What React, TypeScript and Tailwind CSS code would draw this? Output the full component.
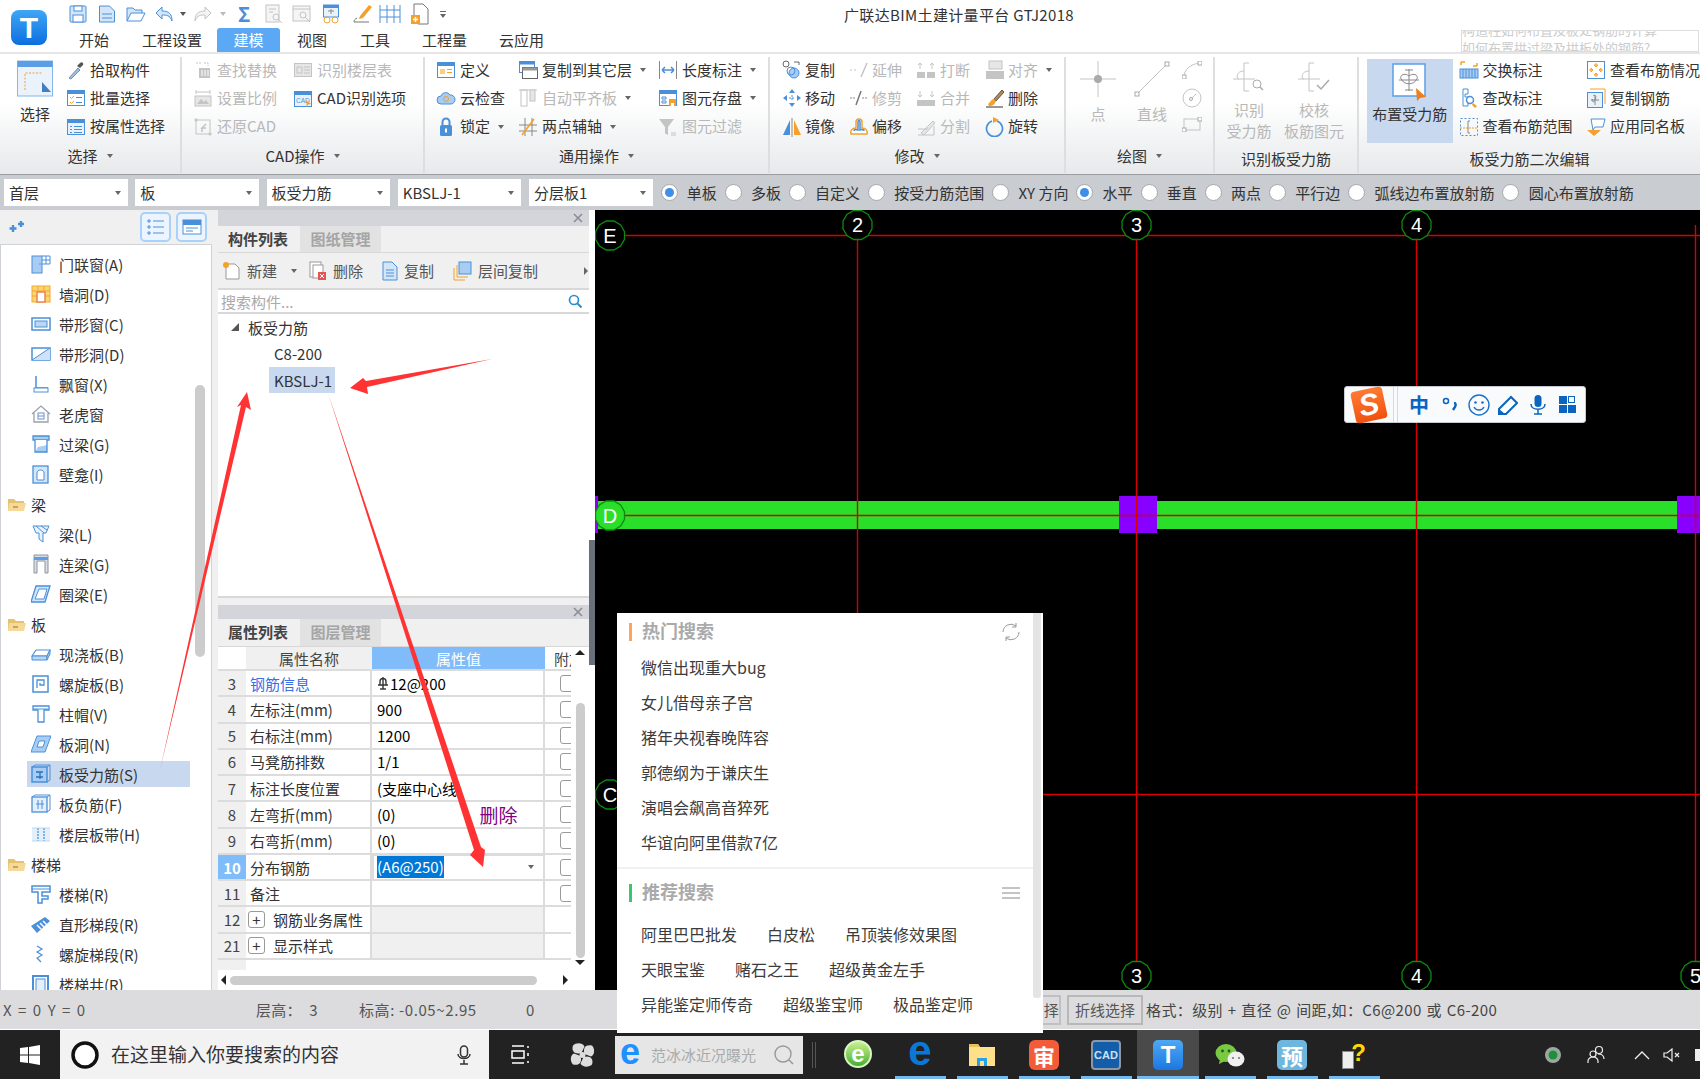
import React from 'react';

const B = '#4a90d9', L = '#d3e5f8', O = '#f5a02a', G = '#c4c4c4', GL = '#e6e6e6';

function S({ w = 20, h, children, vb }: { w?: number; h?: number; children?: React.ReactNode; vb?: string }) {
  const hh = h ?? w;
  return <svg width={w} height={hh} viewBox={vb ?? `0 0 ${w} ${hh}`} fill="none" className="shrink-0">{children}</svg>;
}

const Caret = ({ c = 'ml-[8px]' }: { c?: string }) => (
  <span className={`${c} inline-block w-0 h-0 border-x-[3.5px] border-x-transparent border-t-[4px] border-t-[#666] shrink-0`} />
);

function Item({ icon, text, dis, caret, g = 'w-[24px]' }: { icon: React.ReactNode; text: string; dis?: boolean; caret?: boolean; g?: string }) {
  return (
    <div className={`flex items-center h-[28.5px] whitespace-nowrap ${dis ? 'text-[#b8b8b8]' : 'text-[#333]'}`}>
      <span className={`${g} shrink-0 flex`}>{icon}</span>
      <span className="pb-[2px]">{text}</span>
      {caret && <Caret />}
    </div>
  );
}

function Group({ w, label, caret, children, last, low }: { w: string; label: string; caret?: boolean; children: React.ReactNode; last?: boolean; low?: boolean }) {
  return (
    <div className={`${w} shrink-0 flex flex-col mt-[3px] h-[116px] ${last ? '' : 'border-r-2 border-[#dcdee0]'}`}>
      <div className="h-[85px] -mt-[1px] flex">{children}</div>
      <div className={`flex-1 flex items-center justify-center text-[#333] ${low ? 'pt-[3px]' : 'pb-[3px]'}`}>
        <span>{label}</span>
        {caret && <Caret c="ml-[9px]" />}
      </div>
    </div>
  );
}

/* ---------- ribbon icons ---------- */
const docBox = (c: string, f: string, inner?: React.ReactNode) => (
  <S><rect x="1.5" y="2.5" width="17" height="15" fill={f} stroke={c} /><rect x="1.5" y="2.5" width="17" height="3.5" fill={c} />{inner}</S>
);
const ic = {
  dropper: <S><path d="M3 18l9-10 2 2-9 9z" fill="#9dc0e8" stroke="#7a8da5" /><path d="M11 6l3-3c2-2 4 0 3 2l-3 3z" fill="#555" /></S>,
  batch: docBox(B, '#fff', <><path d="M4 9l1.5 1.5L8 8M4 14l1.5 1.5L8 13" stroke={O} /><path d="M10 9.5h6M10 14.5h6" stroke={B} /></>),
  attr: docBox(B, '#e9f2fb', <path d="M4 9.5h2M8 9.5h8M4 12.5h2M8 12.5h8M4 15.5h2M8 15.5h8" stroke={B} />),
  find: <S><path d="M3 3h5M11 3h4v3" stroke={G} strokeDasharray="2 1" /><rect x="6" y="8" width="11" height="10" fill={G} /><path d="M9 10v6M12 10v6M15 10v6" stroke="#fff" /></S>,
  table: <S><rect x="1.5" y="3.5" width="17" height="13" fill={GL} stroke={G} /><path d="M4 7h5v6H4zM11 7h6M11 10h6M11 13h6" stroke={G} /></S>,
  scale: <S><path d="M3 4h14M3 2v4M17 2v4" stroke={G} /><rect x="2" y="8" width="16" height="10" fill={GL} stroke={G} /><path d="M4 16l4-5 3 3 2-2 3 4z" fill={G} /></S>,
  cadopt: docBox(B, '#e9f2fb', <><text x="3" y="14" fontSize="6.5" fill={B} fontFamily="Liberation Sans">CAD</text><path d="M13 11l5 4-3 .5-1 3z" fill={O} /></>),
  restore: <S><rect x="3" y="3" width="14" height="14" stroke={G} /><path d="M1 3h4M15 17h4M3 1v4M17 15v4" stroke={G} /><path d="M13 7l-4 4h4M9 11v4" stroke={G} strokeWidth="1.5" /></S>,
  define: docBox(B, '#fff', <><rect x="4" y="9" width="5" height="5" fill="#f9cf80" /><path d="M11 9.5h5M11 12.5h5" stroke={O} /></>),
  cloud: <S><path d="M5 16a4 4 0 010-8 5 5 0 019-1 4.5 4.5 0 011 9z" fill="#a9cdf2" stroke={B} /><circle cx="10" cy="11" r="2.5" stroke={O} /></S>,
  lock: <S><rect x="4" y="8" width="12" height="11" rx="1.5" fill={B} /><path d="M6.5 8V5a3.5 3.5 0 017 0v3" stroke={B} strokeWidth="2" /><rect x="9" y="11.5" width="2" height="4" fill="#fff" /></S>,
  copyto: <S><rect x="1.5" y="1.5" width="15" height="11" fill="#fff" stroke={B} /><rect x="1.5" y="1.5" width="15" height="3" fill={B} /><rect x="4.5" y="7.5" width="15" height="11" fill="#fff" stroke="#666" /><rect x="4.5" y="7.5" width="15" height="3" fill="#999" /></S>,
  align: <S><path d="M1 2h18" stroke={G} /><rect x="3" y="2" width="6" height="16" stroke={G} /><rect x="12" y="2" width="5" height="11" fill={GL} stroke={G} /></S>,
  twopt: <S><path d="M7 1v18M14 1v18M1 8h18M1 14h18" stroke="#888" /><path d="M4 18L16 2" stroke={O} strokeWidth="1.5" /></S>,
  length: <S><path d="M1.5 1v18M18.5 1v18" stroke="#888" /><path d="M4 10h12M4 10l3-3M4 10l3 3M16 10l-3-3M16 10l-3 3" stroke={B} strokeWidth="1.5" /></S>,
  save2: docBox(B, '#fff', <><path d="M4 9h4v2H4zM4 13h4v2H4z" stroke={B} /><rect x="11" y="11" width="7" height="7" fill={O} /><rect x="13" y="15" width="3" height="3" fill="#fff" /></>),
  filter: <S><path d="M1 2h15l-6 8v8l-3-1.5V10z" fill={G} /><path d="M13 16h5M13 18h5" stroke={G} /></S>,
  copy: <S><circle cx="4" cy="4" r="3" stroke="#666" /><path d="M12 2h5v3" stroke="#666" /><circle cx="12" cy="13" r="5" fill="#a9cdf2" stroke={B} /><circle cx="9" cy="11" r="4" stroke={B} /></S>,
  move: <S><path d="M10 1l3 4h-6zM10 19l3-4h-6zM1 10l4-3v6zM19 10l-4-3v6z" fill={B} /><path d="M7 10h6M10 7v6" stroke={B} strokeDasharray="2 1" /></S>,
  mirror: <S><path d="M8 3L1 18h7z" fill={B} /><path d="M10 1v19" stroke="#888" /><path d="M12 3l7 15h-7z" fill={O} /></S>,
  extend: <S><path d="M1 10h8" stroke={G} strokeDasharray="2 2" /><path d="M12 17L18 3" stroke={G} strokeWidth="1.5" /></S>,
  trim: <S><path d="M1 10h6M13 10h6" stroke="#888" strokeDasharray="2 1" /><path d="M7 17L12 3" stroke="#777" strokeWidth="1.5" /></S>,
  offset: <S><path d="M2 17c-1-3 1-6 5-6V5c0-4 6-4 6 0v6c4 0 6 3 5 6z" fill="#fff" stroke={O} strokeWidth="1.5" /><path d="M5 14c0-1 1-2 4-1V5c0-2 2-2 2 0v8c3-1 4 0 4 1" stroke={B} strokeWidth="1.5" /></S>,
  brk: <S><rect x="1" y="12" width="8" height="6" fill={G} /><rect x="11" y="12" width="8" height="6" fill={G} /><path d="M4 9V3M4 3l-2 2M4 3l2 2M16 9V3M16 3l-2 2M16 3l2 2" stroke={G} /></S>,
  merge: <S><rect x="1" y="12" width="18" height="6" fill={G} /><path d="M4 3v6M4 9l-2-2M4 9l2-2M16 3v6M16 9l-2-2M16 9l2-2" stroke={G} /></S>,
  split: <S><path d="M2 18h16V9" stroke={G} /><path d="M5 16L17 4l2 2L8 18z" fill={GL} stroke={G} /><path d="M2 12h10" stroke={G} /></S>,
  alignr: <S><rect x="4" y="1" width="13" height="8" fill={GL} stroke={G} /><rect x="1" y="11" width="18" height="8" fill={G} /></S>,
  del: <S><path d="M9 11L17 2l2 2-8 9z" fill="#b98a4a" stroke="#555" /><path d="M3 16c2-1 3-5 6-5l2 2c-1 3-3 5-7 5z" fill={O} /><path d="M1 19h17" stroke="#333" /></S>,
  rotate: <S><path d="M7 4a8 8 0 105 0" stroke={B} strokeWidth="1.7" /><path d="M8 0l6 3-6 3z" fill={O} /></S>,
  swap: <S><path d="M2 2h4M2 2v3M18 6h-4M18 6V3" stroke={O} strokeWidth="1.5" /><rect x="1" y="9" width="18" height="9" fill="#a9cdf2" stroke={B} /><path d="M4 9v9M7 9v9M10 9v9M13 9v9M16 9v9" stroke={B} /></S>,
  check: <S><path d="M4 1h5v5h-3v3h3v9H4z" stroke={B} /><circle cx="11" cy="12" r="3.5" fill="#fff" stroke={B} strokeWidth="1.5" /><path d="M14 15l4 3-2 2-3-3z" fill={O} /></S>,
  range: <S><rect x="1.5" y="1.5" width="17" height="17" stroke={B} strokeDasharray="2 2" /><path d="M1 11h18" stroke={O} strokeDasharray="2 1" /><path d="M11 4H9v12h2" stroke="#888" /></S>,
  view: <S><rect x="1.5" y="1.5" width="17" height="17" fill="#fff" stroke={B} /><path d="M10 3v4M10 13v4M3 10h4M13 10h4M10 7l-2-2h4zM10 13l-2 2h4zM7 10L5 8v4zM13 10l2-2v4z" stroke={O} /></S>,
  copysteel: <S><path d="M4 1h15v15" stroke={O} /><rect x="1.5" y="4.5" width="15" height="15" fill="#e9f2fb" stroke={B} /><path d="M9 7v10M5 12h8" stroke="#888" /><path d="M7 8c2-2 4 0 2 4s-4 0-2-1" stroke="#888" /></S>,
  apply: <S><path d="M5 2h14l-2 8H9l-2 3z" fill="#fff" stroke={B} /><path d="M1 13h14L8 19z" fill={O} /></S>,
};

const Big = ({ children, label, dis }: { children: React.ReactNode; label: React.ReactNode; dis?: boolean }) => (
  <div className={`flex flex-col items-center ${dis ? 'text-[#b8b8b8]' : 'text-[#333]'}`}>
    <div className="h-[41px] flex items-end">{children}</div>
    <div className="mt-[6px] leading-[21px] text-center whitespace-nowrap">{label}</div>
  </div>
);

function Ribbon() {
  return (
    <div className="h-[122px] shrink-0 flex bg-gradient-to-b from-white from-40% to-[#e7e9eb] border-t-2 border-[#e6e6e6] text-[15px] leading-none">
      <Group w="w-[182px]" label="选择" caret>
        <div className="w-[66px] pl-[4px] flex justify-center">
          <Big label="选择">
            <S w={36} h={37}><rect x="0.5" y="1" width="35" height="35" fill="#eaf2fb" stroke="#86b6ea" /><rect x="0.5" y="1" width="35" height="6" fill="#5b9ee6" /><path d="M8 30V13h18" stroke={O} strokeDasharray="2 1.5" /><path d="M25 22l9 10h-9z" fill="#3f7fc8" /></S>
          </Big>
        </div>
        <div className="flex flex-col">
          <Item icon={ic.dropper} text="拾取构件" />
          <Item icon={ic.batch} text="批量选择" />
          <Item icon={ic.attr} text="按属性选择" />
        </div>
      </Group>
      <Group w="w-[243px]" label="CAD操作" caret>
        <div className="pl-[11px] w-[111px] flex flex-col">
          <Item dis icon={ic.find} text="查找替换" />
          <Item dis icon={ic.scale} text="设置比例" />
          <Item dis icon={ic.restore} text="还原CAD" />
        </div>
        <div className="flex flex-col">
          <Item dis icon={ic.table} text="识别楼层表" />
          <Item icon={ic.cadopt} text="CAD识别选项" />
        </div>
      </Group>
      <Group w="w-[345px]" label="通用操作" caret>
        <div className="pl-[11px] w-[93px] flex flex-col">
          <Item icon={ic.define} text="定义" />
          <Item icon={ic.cloud} text="云检查" />
          <Item icon={ic.lock} text="锁定" caret />
        </div>
        <div className="w-[140px] flex flex-col">
          <Item icon={ic.copyto} text="复制到其它层" caret />
          <Item dis icon={ic.align} text="自动平齐板" caret />
          <Item icon={ic.twopt} text="两点辅轴" caret />
        </div>
        <div className="flex flex-col">
          <Item icon={ic.length} text="长度标注" caret />
          <Item icon={ic.save2} text="图元存盘" caret />
          <Item dis icon={ic.filter} text="图元过滤" />
        </div>
      </Group>
      <Group w="w-[296px]" label="修改" caret>
        <div className="pl-[12px] w-[79px] flex flex-col">
          <Item g="w-[23px]" icon={ic.copy} text="复制" />
          <Item g="w-[23px]" icon={ic.move} text="移动" />
          <Item g="w-[23px]" icon={ic.mirror} text="镜像" />
        </div>
        <div className="w-[67px] flex flex-col">
          <Item dis g="w-[23px]" icon={ic.extend} text="延伸" />
          <Item dis g="w-[23px]" icon={ic.trim} text="修剪" />
          <Item g="w-[23px]" icon={ic.offset} text="偏移" />
        </div>
        <div className="w-[69px] flex flex-col">
          <Item dis icon={ic.brk} text="打断" />
          <Item dis icon={ic.merge} text="合并" />
          <Item dis icon={ic.split} text="分割" />
        </div>
        <div className="flex flex-col">
          <Item dis g="w-[23px]" icon={ic.alignr} text="对齐" caret />
          <Item g="w-[23px]" icon={ic.del} text="删除" />
          <Item g="w-[23px]" icon={ic.rotate} text="旋转" />
        </div>
      </Group>
      <Group w="w-[149px]" label="绘图" caret>
        <div className="ml-[14px] w-[36px] flex justify-center">
          <Big dis label="点">
            <S w={36} h={36}><path d="M18 0v36M0 18h36" stroke={G} /><circle cx="18" cy="18" r="4" fill="#aaa" /></S>
          </Big>
        </div>
        <div className="ml-[18px] w-[36px] flex justify-center">
          <Big dis label="直线">
            <S w={36} h={36}><path d="M3 33L33 3" stroke={G} /><rect x="1" y="31" width="4" height="4" fill="#fff" stroke="#aaa" /><rect x="31" y="1" width="4" height="4" fill="#fff" stroke="#aaa" /></S>
          </Big>
        </div>
        <div className="ml-[12px] flex flex-col gap-[9px] pt-[5px]">
          <S w={20} h={18}><path d="M2 16c0-7 6-13 16-14" stroke={G} /><rect x="0" y="14" width="4" height="4" fill="#fff" stroke="#aaa" /><rect x="16" y="0" width="4" height="4" fill="#fff" stroke="#aaa" /></S>
          <S w={20} h={20}><circle cx="10" cy="10" r="9" stroke={G} /><circle cx="9" cy="11" r="1.5" stroke="#aaa" /><path d="M10 10l4-4" stroke={G} /></S>
          <S w={20} h={15}><rect x="2" y="2" width="16" height="11" stroke={G} /><rect x="0" y="11" width="4" height="4" fill="#fff" stroke="#aaa" /><rect x="16" y="0" width="4" height="4" fill="#fff" stroke="#aaa" /></S>
        </div>
      </Group>
      <Group w="w-[144px]" label="识别板受力筋" low>
        <div className="w-[68px] flex justify-center">
          <Big dis label={<>识别<br />受力筋</>}>
            <S w={34} h={32}><path d="M1 18h22M12 2v28M12 2h5M12 30h5" stroke={G} /><path d="M7 18c-3 0-3-8 5-8" stroke={G} /><circle cx="25" cy="23" r="4" stroke="#aaa" /><path d="M28 26l3 3" stroke="#aaa" strokeWidth="1.5" /></S>
          </Big>
        </div>
        <div className="w-[62px] flex justify-center">
          <Big dis label={<>校核<br />板筋图元</>}>
            <S w={34} h={32}><path d="M1 18h22M12 2v28M12 2h5M12 30h5" stroke={G} /><path d="M7 18c-3 0-3-8 5-8" stroke={G} /><path d="M20 24l4 4 8-9" stroke="#aaa" strokeWidth="1.5" /></S>
          </Big>
        </div>
      </Group>
      <Group w="w-[341px]" label="板受力筋二次编辑" last low>
        <div className="ml-[8px] w-[86px] h-[84px] bg-[#c7d8ef] flex flex-col items-center mt-[3px] text-[#333]">
          <div className="mt-[4px]">
            <S w={36} h={38}><rect x="1" y="1" width="32" height="32" fill="#fff" stroke="#5b9ee6" strokeWidth="1.5" /><path d="M17 6v22M7 17h20M13 7h8M13 27h8" stroke="#888" /><path d="M10 17c-4-4 2-8 7-4 5-4 11 0 7 4-2 5-12 5-14 0z" stroke="#888" /><path d="M24 25l10 9-6 1-3 3z" fill="#ef7d1d" /></S>
          </div>
          <div className="mt-[5px] whitespace-nowrap">布置受力筋</div>
        </div>
        <div className="ml-[6px] w-[128px] flex flex-col">
          <Item icon={ic.swap} text="交换标注" />
          <Item icon={ic.check} text="查改标注" />
          <Item icon={ic.range} text="查看布筋范围" />
        </div>
        <div className="flex flex-col">
          <Item icon={ic.view} text="查看布筋情况" />
          <Item icon={ic.copysteel} text="复制钢筋" />
          <Item icon={ic.apply} text="应用同名板" />
        </div>
      </Group>
    </div>
  );
}

function Header() {
  const qat = (
    <div className="flex items-center h-full">
      <S w={18} h={20}><rect x="1" y="2" width="16" height="16" rx="1" fill={L} stroke={B} /><rect x="5" y="2" width="8" height="5" fill="#fff" stroke={B} /><rect x="4" y="11" width="10" height="7" fill="#fff" stroke={B} /></S>
      <span className="ml-[11px]"><S w={18} h={20}><path d="M1.5 2h10l5 5v11h-15z" fill={L} stroke={B} /><path d="M4 10h10M4 14h10" stroke={B} /></S></span>
      <span className="ml-[10px]"><S w={20} h={20}><path d="M1 17V4h6l2 2h7v3" fill={L} stroke={B} /><path d="M1 17l4-8h14l-4 8z" fill="#fff" stroke={B} /></S></span>
      <span className="ml-[9px]"><S w={18} h={18}><path d="M7 2L1 8l6 6V10c4 0 8 0 10 6 0-7-3-10-10-10z" fill={L} stroke={B} /></S></span>
      <span className="ml-[7px] w-0 h-0 border-x-[3px] border-x-transparent border-t-[4px] border-t-[#555]" />
      <span className="ml-[8px]"><S w={18} h={18}><path d="M11 2l6 6-6 6V10C7 10 3 10 1 16c0-7 3-10 10-10z" fill="#f3f3f3" stroke={G} /></S></span>
      <span className="ml-[8px] w-0 h-0 border-x-[3px] border-x-transparent border-t-[4px] border-t-[#bbb]" />
      <span className="ml-[12px] w-[16px] text-[20px] font-bold text-[#4a90d9] leading-none">Σ</span>
      <span className="ml-[11px]"><S w={19} h={20}><rect x="1" y="1" width="13" height="17" fill="#f5f5f5" stroke={G} /><circle cx="11" cy="13" r="3" stroke={G} /><path d="M13 15l4 4M4 5h7M4 8h4" stroke={G} /></S></span>
      <span className="ml-[8px]"><S w={20} h={20}><rect x="1" y="2" width="17" height="15" fill="#f5f5f5" stroke={G} /><path d="M1 5h17" stroke={G} /><circle cx="11" cy="11" r="3" stroke={G} /><path d="M13 13l5 5" stroke={G} /></S></span>
      <span className="ml-[10px]"><S w={20} h={20}><rect x="1.5" y="1" width="15" height="12" fill="#e9f2fb" stroke={B} /><rect x="1.5" y="1" width="15" height="3" fill={B} /><path d="M6 7h6M9 5v5" stroke="#888" /><circle cx="5" cy="16" r="3" stroke={O} /><circle cx="13" cy="16" r="3" stroke={O} /></S></span>
      <span className="ml-[11px]"><S w={20} h={20}><path d="M7 12L16 1l3 2-9 11-4 1z" fill={O} /><path d="M1 18h15M4 14c-2 1-3 2-3 4" stroke="#777" /></S></span>
      <span className="ml-[6px]"><S w={22} h={20}><path d="M1 1v18M21 1v18M1 6h20M1 13h20M8 1v18M15 1v18" stroke={B} /></S></span>
      <span className="ml-[9px]"><S w={21} h={22}><path d="M4 12V1h9l5 5v15H8" fill="#fff" stroke="#777" /><rect x="1" y="12" width="9" height="9" fill={O} /><path d="M5.5 14v5M3 16.5h5" stroke="#fff" strokeWidth="1.5" /></S></span>
      <span className="ml-[9px] flex flex-col gap-[2px] items-center"><span className="w-[6px] h-[1px] bg-[#666]" /><span className="w-0 h-0 border-x-[3px] border-x-transparent border-t-[4px] border-t-[#666]" /></span>
    </div>
  );
  return (
    <div className="h-[52px] shrink-0 flex bg-white">
      <div className="w-[57px] shrink-0 pl-[11px] pt-[10px] flex items-start">
        <div className="w-[36px] h-[35px] rounded-[8px] bg-gradient-to-b from-[#3fa6f5] to-[#0a6ee0] flex items-center justify-center text-white text-[30px] font-bold leading-none [font-family:'Liberation_Sans',sans-serif]">T</div>
      </div>
      <div className="flex-1 flex flex-col min-w-0">
        <div className="h-[28px] pl-[12px] flex items-center">
          {qat}
          <div className="ml-[398px] text-[15px] text-[#333] leading-none whitespace-nowrap tracking-[0.35px]">广联达BIM土建计量平台 GTJ2018</div>
        </div>
        <div className="h-[24px] flex text-[15px] text-[#333] leading-none items-center whitespace-nowrap">
          <span className="ml-[22px] pb-[2px] shrink-0">开始</span>
          <span className="ml-[33px] pb-[2px] shrink-0">工程设置</span>
          <span className="ml-[15px] w-[63px] h-[24px] shrink-0 bg-[#5ba9f5] text-white rounded-t-[3px] flex items-center justify-center pb-[2px]">建模</span>
          <span className="ml-[17px] pb-[2px] shrink-0">视图</span>
          <span className="ml-[33px] pb-[2px] shrink-0">工具</span>
          <span className="ml-[32px] pb-[2px] shrink-0">工程量</span>
          <span className="ml-[32px] pb-[2px] shrink-0">云应用</span>
          <div className="ml-[917px] w-[238px] h-[22px] shrink-0 border border-[#dddddd] overflow-hidden text-[13px] leading-[18px] text-[#cccccc] whitespace-nowrap self-end">
            <div className="-mt-[10px]">构造柱如何布置及板处钢筋的计算</div>
            <div>如何布置拱过梁及拱板处的钢筋?</div>
          </div>
        </div>
      </div>
    </div>
  );
}

const Sel = ({ t }: { t: string }) => (
  <div className="w-[123.5px] shrink-0 h-[27px] bg-white flex items-center justify-between pl-[5px] pr-[7px] text-[15px] text-[#333] leading-none">
    <span>{t}</span><Caret c="" />
  </div>
);

const Radio = ({ t, on }: { t: string; on?: boolean }) => (
  <div className="flex items-center gap-[9.2px] text-[15px] text-[#333] leading-none whitespace-nowrap">
    <span className="w-[17px] h-[17px] rounded-full bg-white border border-[#a5a8ad] flex items-center justify-center">
      {on && <span className="w-[9px] h-[9px] rounded-full bg-[#3f8fe8]" />}
    </span>
    <span>{t}</span>
  </div>
);

function OptionBar() {
  return (
    <div className="h-[36px] shrink-0 bg-[#c9ccd1] border-t border-[#9a9da2] flex items-center pl-[4px]">
      <div className="flex gap-[7.75px]">
        <Sel t="首层" />
        <Sel t="板" />
        <Sel t="板受力筋" />
        <Sel t="KBSLJ-1" />
        <Sel t="分层板1" />
      </div>
      <div className="ml-[8px] flex gap-[8px]">
        <Radio t="单板" on />
        <Radio t="多板" />
        <Radio t="自定义" />
        <Radio t="按受力筋范围" />
        <Radio t="XY 方向" />
        <Radio t="水平" on />
        <Radio t="垂直" />
        <Radio t="两点" />
        <Radio t="平行边" />
        <Radio t="弧线边布置放射筋" />
        <Radio t="圆心布置放射筋" />
      </div>
    </div>
  );
}

/* ---------- tree icons ---------- */
const tIc: Record<string, React.ReactNode> = {
  a: <S><rect x="1" y="2" width="10" height="17" fill="#a9cdf2" stroke={B} /><circle cx="9" cy="10" r=".8" fill={B} /><path d="M11 2h8v8h-8M15 2v8M11 6h8" stroke={B} /></S>,
  b: <S><rect x="1" y="2" width="18" height="16" fill="#fbd474" stroke="#f3a92a" /><path d="M1 7h18M1 12h18M7 2v5M13 2v5" stroke="#f3a92a" /><rect x="6" y="8" width="8" height="10" fill="#fff" stroke="#e8845a" strokeWidth="1.5" /></S>,
  c: <S><rect x="1" y="4" width="18" height="12" fill="#fff" stroke={B} strokeWidth="1.5" /><rect x="4" y="7" width="12" height="6" fill="#bcd7f3" stroke={B} /></S>,
  d: <S><rect x="1" y="4" width="18" height="12" fill="#fff" stroke={B} strokeWidth="1.5" /><path d="M1 16L19 4v12z" fill="#cfe2f7" /><path d="M1 16L19 4" stroke={B} /></S>,
  e: <S><path d="M5 2v12h12" stroke={B} strokeWidth="1.5" /><rect x="3" y="14" width="14" height="4" fill="#fff" stroke={B} /></S>,
  f: <S><path d="M1 10l9-8 9 8M3 9v9h14V9" stroke="#9aa1a8" strokeWidth="1.3" /><rect x="7" y="9" width="6" height="6" stroke="#6b94c4" /><path d="M7 12h6" stroke="#6b94c4" /></S>,
  g: <S><path d="M2 2h16v4H2z" fill="#a9cdf2" stroke={B} strokeWidth="1.3" /><path d="M4 6v12h12V6" fill="#fff" /><path d="M4 18l3-5 9-2v7z" fill="#a9cdf2" /><path d="M4 6v12h12V6" stroke={B} strokeWidth="1.3" /></S>,
  h: <S><rect x="2" y="2" width="15" height="17" fill="#d3e5f8" stroke={B} strokeWidth="1.3" /><path d="M6 16V9c0-4 7-4 7 0v7z" fill="#fff" stroke={B} /></S>,
  i: <S><path d="M2 2h16l-3 7h-3v9l-4-3V9H5z" fill="#e9f2fb" stroke={B} /><path d="M5 2l8 7M10 2l6 4" stroke={B} /></S>,
  j: <S><path d="M3 1h14v18h-3V7H6v12H3z" fill="#d8dde3" stroke="#8e959c" /><rect x="3" y="3" width="14" height="3" fill="#5b9ee6" /></S>,
  k: <S><path d="M5 2h14l-5 16H0z" fill="#d3e5f8" stroke={B} strokeWidth="1.3" /><path d="M8 5h8l-3 10H4z" fill="#fff" stroke={B} /></S>,
  l: <S><path d="M1 12l4-6h14l-3 6z" fill="#fff" stroke={B} strokeWidth="1.2" /><path d="M1 12h15v4H1z" fill="#bcd7f3" stroke={B} /><path d="M16 12l3-6v4l-3 6z" fill="#a9cdf2" stroke={B} /></S>,
  m: <S><rect x="2" y="2" width="15" height="16" fill="#fff" stroke={B} strokeWidth="1.5" /><path d="M6 14V6h7v5H9V9" stroke={B} strokeWidth="1.3" /></S>,
  n: <S><path d="M2 2h16v4h-5v12H7V6H2z" fill="#fff" stroke={B} strokeWidth="1.3" /><path d="M2 5h16" stroke={B} /></S>,
  o: <S><path d="M6 2h14l-6 16H0z" fill="#a9cdf2" stroke={B} /><path d="M8 7h6l-2 6H6z" fill="#fff" stroke={B} /></S>,
  p: <S><rect x="1" y="3" width="15" height="15" fill="#a9cdf2" stroke={B} strokeWidth="1.5" /><path d="M16 3l3-2v15l-3 2M1 3l3-2h15" stroke={B} /><path d="M5 8h7M5 13h7M9 8v7" stroke="#2a6fba" strokeWidth="1.3" /></S>,
  q: <S><rect x="1" y="3" width="15" height="15" fill="#e3effb" stroke={B} strokeWidth="1.3" /><path d="M16 3l3-2v15l-3 2M1 3l3-2h15" stroke={B} /><path d="M7 6v9M11 6v9M5 10h8" stroke={B} /></S>,
  r: <S><rect x="1" y="4" width="18" height="13" fill="#e3effb" /><path d="M7 4v13M13 4v13" stroke={B} strokeDasharray="2 1" strokeWidth="1.3" /><path d="M1 4h18M1 17h18" stroke="#bcd7f3" /></S>,
  s: <S><path d="M1 2h18v6h-8v4h6v3h-6v4H7V8H1z" fill="#fff" stroke={B} strokeWidth="1.5" /><path d="M1 5h18" stroke={B} /></S>,
  t: <S><path d="M0 12l14-9 5 4-13 12z" fill={B} /><path d="M6 11l4 4M9 9l4 4M12 7l4 4" stroke="#fff" strokeWidth="1.5" /></S>,
  u: <S><path d="M6 2l5 3-5 3 5 3-5 3 4 4" stroke={B} strokeWidth="1.2" /></S>,
  v: <S><rect x="2" y="2" width="15" height="17" fill="#fff" stroke={B} strokeWidth="2" /><rect x="5" y="5" width="9" height="12" fill="#e3effb" stroke={B} /></S>,
};
const Folder = () => <S w={20} h={18}><path d="M1 15V4h6l2 2h8v3" fill="#e5c26e" /><path d="M1 16l1-8h17l-2 8z" fill="#f6d998" /><path d="M6 12h5" stroke="#a88a3c" strokeWidth="1.3" /></S>;

const treeData: [string, string][] = [
  ['a', '门联窗(A)'], ['b', '墙洞(D)'], ['c', '带形窗(C)'], ['d', '带形洞(D)'], ['e', '飘窗(X)'], ['f', '老虎窗'], ['g', '过梁(G)'], ['h', '壁龛(I)'],
  ['', '梁'], ['i', '梁(L)'], ['j', '连梁(G)'], ['k', '圈梁(E)'],
  ['', '板'], ['l', '现浇板(B)'], ['m', '螺旋板(B)'], ['n', '柱帽(V)'], ['o', '板洞(N)'], ['p', '板受力筋(S)'], ['q', '板负筋(F)'], ['r', '楼层板带(H)'],
  ['', '楼梯'], ['s', '楼梯(R)'], ['t', '直形梯段(R)'], ['u', '螺旋梯段(R)'], ['v', '楼梯井(R)'],
];

function LeftPanel() {
  return (
    <div className="w-[218px] shrink-0 pr-[6px] bg-[#f0f0f0] h-full flex flex-col">
      <div className="h-[35px] shrink-0 bg-[#f0f0f0] border-b border-[#cfd2d6] flex items-center pl-[8px]">
        <S w={18} h={14}><path d="M5 5v7M1.5 8.5h7M13 1v6M10 4h6" stroke={B} strokeWidth="2.4" /></S>
        <span className="ml-[114px] w-[31px] h-[30px] rounded-[5px] border-2 border-[#a9d2fb] bg-[#ecf5ff] flex items-center justify-center">
          <S w={18} h={16}><path d="M6 2h11M6 8h11M6 14h11" stroke={B} /><path d="M1 1h2v2H1zM1 7h2v2H1zM1 13h2v2H1z" stroke={B} /></S>
        </span>
        <span className="ml-[5px] w-[31px] h-[30px] rounded-[5px] border-2 border-[#a9d2fb] bg-[#ecf5ff] flex items-center justify-center">
          <S w={20} h={16}><rect x="1" y="1" width="18" height="14" fill="#fff" stroke={B} /><rect x="1" y="1" width="18" height="5" fill={B} /><path d="M4 9h12M4 12h7" stroke={B} /></S>
        </span>
      </div>
      <div className="flex-1 bg-white border-l border-[#cfd2d6] border-r border-r-[#cfd2d6] flex overflow-hidden text-[15px] text-[#333] leading-none">
        <div className="w-[194px] shrink-0 pt-[4px]">
          {treeData.map(([k, t]) => k === '' ? (
            <div key={t} className="h-[30px] flex items-center pl-[6px]">
              <span className="w-[24px] shrink-0 flex"><Folder /></span><span>{t}</span>
            </div>
          ) : (
            <div key={t} className="h-[30px] pl-[26px] flex items-center">
              <div className={`w-[163px] h-[26px] pl-[4px] flex items-center ${k === 'p' ? 'bg-[#c7d8ef]' : ''}`}>
                <span className="w-[28px] shrink-0 flex">{tIc[k]}</span><span className="whitespace-nowrap">{t}</span>
              </div>
            </div>
          ))}
        </div>
        <div className="w-[10px] h-[272px] mt-[140px] rounded-[5px] bg-[#cccccc] shrink-0" />
      </div>
    </div>
  );
}

const Close = () => <S w={10} h={10}><path d="M1 1l8 8M9 1l-8 8" stroke="#8a8d92" strokeWidth="1.6" /></S>;

const Tabs = ({ a, b, h }: { a: string; b: string; h: string }) => (
  <div className={`${h} shrink-0 flex bg-[#f0f0f0] border-b border-[#d8d8d8] text-[15px] leading-none`}>
    <div className="w-[80px] flex items-center justify-center font-bold text-[#444] pb-[2px]">{a}</div>
    <div className="ml-[2px] w-[81px] flex items-center justify-center bg-[#e2e2e2] text-[#a5a5a5] font-bold pb-[2px]">{b}</div>
  </div>
);

const rows: [string, string, string, string?][] = [
  ['3', '钢筋信息', '12@200', 'blue'],
  ['4', '左标注(mm)', '900'],
  ['5', '右标注(mm)', '1200'],
  ['6', '马凳筋排数', '1/1'],
  ['7', '标注长度位置', '(支座中心线'],
  ['8', '左弯折(mm)', '(0)'],
  ['9', '右弯折(mm)', '(0)'],
  ['10', '分布钢筋', '(A6@250)', 'sel'],
  ['11', '备注', ''],
  ['12', '钢筋业务属性', '', 'grp'],
  ['21', '显示样式', '', 'grp'],
];

function PropRow({ r }: { r: [string, string, string, string?] }) {
  const [n, name, val, kind] = r;
  const sel = kind === 'sel', grp = kind === 'grp';
  return (
    <div className="h-[26.35px] flex border-b-2 border-[#dcdcdc] box-border">
      <div className={`w-[28px] shrink-0 flex items-center justify-center ${sel ? 'bg-[#7fbcf9] text-white font-bold' : 'bg-[#f0f0f0] text-[#444]'}`}>{n}</div>
      <div className={`w-[126px] shrink-0 flex items-center pl-[4px] border-r-2 border-[#dcdcdc] whitespace-nowrap ${kind === 'blue' ? 'text-[#3a6fe8]' : 'text-[#333]'}`}>
        {grp && <span className="mr-[8px] w-[17px] h-[17px] rounded-[3px] border border-[#999] flex items-center justify-center text-[15px] leading-none shrink-0 -ml-[2px]">+</span>}
        {name}
      </div>
      <div className={`w-[173px] shrink-0 flex items-center border-r-2 border-[#dcdcdc] whitespace-nowrap ${grp ? 'bg-[#f0f0f0]' : ''} ${sel ? 'pl-[3px] pr-[9px] justify-between border-2 border-[#4ea3f5] -mt-[1px] h-[27px]' : 'pl-[5px]'}`}>
        {kind === 'blue' && <span className="mr-[1px]"><S w={12} h={14}><path d="M1 9h10M6 1v12M3 9V5.5a3 3 0 016 0V9" stroke="#333" strokeWidth="1.4" /><path d="M3 13h6" stroke="#333" strokeWidth="1.4" /></S></span>}
        {sel ? <><span className="bg-[#0078d7] text-white h-[22px] leading-[22px]">{val}</span><Caret c="" /></> : <span>{val}</span>}
        {n === '8' && <span className="ml-[84px] text-[19px] text-[#800080]">删除</span>}
      </div>
      <div className="w-[26px] shrink-0 flex items-center overflow-hidden pl-[15px]">
        {!grp && <span className="w-[17px] h-[17px] shrink-0 border border-[#9a9a9a] rounded-[3px] bg-white" />}
      </div>
    </div>
  );
}

function CenterPanel() {
  return (
    <div className="w-[371px] shrink-0 h-full flex flex-col bg-[#f0f0f0]">
      <div className="h-[16px] shrink-0 bg-[#d3d5da] flex items-center justify-end pr-[6px]"><Close /></div>
      <Tabs a="构件列表" b="图纸管理" h="h-[27px]" />
      <div className="h-[37px] shrink-0 bg-[#f0f0f0] border-b-2 border-[#d8d8d8] flex items-center text-[15px] text-[#555] leading-none pl-[5px] whitespace-nowrap overflow-hidden">
        <S w={18} h={20}><path d="M3 3h9l4 4v11H3z" fill="#fff" stroke="#999" /><circle cx="3" cy="4" r="3" fill={O} /></S>
        <span className="ml-[6px]">新建</span><Caret c="ml-[14px]" />
        <span className="ml-[12px]"><S w={18} h={20}><rect x="1" y="1" width="11" height="15" fill="#fff" stroke="#999" /><rect x="4" y="4" width="10" height="13" fill="#fff" stroke="#999" /><rect x="9" y="11" width="8" height="8" fill="#e05555" /><path d="M11 13l4 4M15 13l-4 4" stroke="#fff" /></S></span>
        <span className="ml-[6px]">删除</span>
        <span className="ml-[19px]"><S w={16} h={20}><path d="M1 1h9l5 5v13H1z" fill={L} stroke={B} /><path d="M4 9h8M4 12h8M4 15h8" stroke={B} /></S></span>
        <span className="ml-[6px]">复制</span>
        <span className="ml-[19px]"><S w={19} h={20}><rect x="6" y="1" width="12" height="12" fill="#a9cdf2" stroke={B} /><path d="M4 4v12h11M1 7v12h11" stroke={O} /></S></span>
        <span className="ml-[6px]">层间复制</span>
        <span className="ml-[46px]"><S w={9} h={8}><path d="M0 0l4 4-4 4zM5 0l4 4-4 4z" fill="#666" /></S></span>
      </div>
      <div className="h-[24px] shrink-0 bg-white border-b-2 border-[#d8d8d8] flex items-center justify-between pl-[3px] pr-[7px] text-[15px] text-[#aaa] leading-none">
        <span>搜索构件...</span>
        <S w={14} h={15}><circle cx="6" cy="6" r="4.5" stroke="#2a8fd0" strokeWidth="1.7" /><path d="M9.5 9.5l4 4" stroke="#2a8fd0" strokeWidth="2" /></S>
      </div>
      <div className="h-[284px] shrink-0 bg-white border-b-2 border-[#d8d8d8] text-[15px] text-[#333] leading-none">
        <div className="h-[26px] flex items-center pl-[13px]">
          <span className="w-[17px] shrink-0"><S w={8} h={8}><path d="M8 0v8H0z" fill="#555" /></S></span>
          <span>板受力筋</span>
        </div>
        <div className="h-[27px] flex items-center pl-[56px]">C8-200</div>
        <div className="ml-[51px] w-[66px] h-[26px] bg-[#c7d8ef] flex items-center pl-[5px]">KBSLJ-1</div>
      </div>
      <div className="h-[7px] shrink-0" />
      <div className="h-[14px] shrink-0 bg-[#d3d5da] flex items-center justify-end pr-[6px]"><Close /></div>
      <Tabs a="属性列表" b="图层管理" h="h-[28px]" />
      <div className="flex-1 bg-white flex flex-col text-[15px] leading-none min-h-0">
        <div className="flex flex-1 min-h-0">
          <div className="w-[353px] shrink-0 flex flex-col">
            <div className="h-[24px] shrink-0 flex border-b-2 border-[#dcdcdc]">
              <div className="w-[28px] shrink-0 bg-white" />
              <div className="w-[126px] shrink-0 bg-[#f0f0f0] flex items-center justify-center text-[#444]">属性名称</div>
              <div className="w-[173px] shrink-0 bg-[#7fbcf9] flex items-center justify-center text-white">属性值</div>
              <div className="w-[26px] shrink-0 flex items-center pl-[9px] overflow-hidden whitespace-nowrap text-[#444]">附加</div>
            </div>
            {rows.map(r => <PropRow key={r[0]} r={r} />)}
            <div className="w-[28px] h-[10px] bg-[#f0f0f0]" />
          </div>
          <div className="w-[18px] shrink-0 flex flex-col items-center">
            <span className="mt-[3px] w-0 h-0 border-x-[5px] border-x-transparent border-b-[5px] border-b-[#222]" />
            <div className="mt-[48px] w-[9px] h-[255px] rounded-[5px] bg-[#cccccc]" />
            <span className="mt-[2px] w-0 h-0 border-x-[5px] border-x-transparent border-t-[5px] border-t-[#222]" />
          </div>
        </div>
        <div className="h-[20px] shrink-0 flex items-center pl-[3px]">
          <span className="w-0 h-0 border-y-[5px] border-y-transparent border-r-[5px] border-r-[#222]" />
          <span className="ml-[4px] w-[307px] h-[9px] rounded-[5px] bg-[#cccccc]" />
          <span className="ml-[26px] w-0 h-0 border-y-[5px] border-y-transparent border-l-[5px] border-l-[#222]" />
        </div>
      </div>
    </div>
  );
}

function Canvas() {
  const axis = (x: number, y: number, t: string, onBeam?: boolean) => {
    const r = 15;
    const pts = Array.from({ length: 12 }, (_, i) => {
      const a = Math.PI / 12 + (i * Math.PI) / 6;
      return `${x + r * Math.cos(a)},${y + r * Math.sin(a)}`;
    }).join(' ');
    return (
      <g key={`${t}${x}${y}`}>
        <polygon points={pts} fill={onBeam ? '#2adf2a' : 'black'} stroke="#0e8a0e" strokeWidth="1.3" />
        <text x={x} y={y + 7} textAnchor="middle" fontSize="20" fill="white" fontFamily="Liberation Sans">{t}</text>
      </g>
    );
  };
  const v = [262.5, 541.5, 821.5, 1100.5];
  const h = [25.5, 305.5, 584.5];
  return (
    <div className="flex-1 h-full bg-black relative overflow-hidden">
      <svg width="1105" height="780" viewBox="0 0 1105 780" className="block">
        <rect x="3" y="291" width="1079" height="28" fill="#2adf2a" />
        <rect x="0" y="286" width="3" height="37" fill="#8800ff" />
        <rect x="524" y="286" width="38" height="37" fill="#8800ff" />
        <rect x="1082" y="286" width="23" height="37" fill="#8800ff" />
        {h.map(y => <line key={y} x1="15" x2="1105" y1={y} y2={y} stroke="#d80000" strokeWidth="1.4" />)}
        {v.map(x => <line key={x} x1={x} x2={x} y1="15" y2="766" stroke="#d80000" strokeWidth="1.4" />)}
        {axis(15, 25.5, 'E')}
        {axis(15, 305.5, 'D', true)}
        {axis(15, 584.5, 'C')}
        {axis(262.5, 15, '2')}
        {axis(541.5, 15, '3')}
        {axis(821.5, 15, '4')}
        {axis(541.5, 766, '3')}
        {axis(821.5, 766, '4')}
        {axis(1100.5, 766, '5')}
      </svg>
      <div className="absolute left-[749px] top-[176px] w-[242px] h-[37px] rounded-[3px] bg-[#f9fafc] border border-[#c5c9d0] flex items-center">
        <div className="ml-[8px] w-[32px] h-[32px] rounded-[4px] rotate-[-12deg] bg-gradient-to-b from-[#ff7a30] to-[#f0500f] flex items-center justify-center text-white text-[30px] font-bold italic leading-none [font-family:'Liberation_Sans',sans-serif]">S</div>
        <div className="ml-[8px] w-[5px] h-[35px] border-x border-[#f3d0c4]" />
        <span className="ml-[11px] text-[20px] font-bold text-[#0a64c0] leading-none">中</span>
        <span className="ml-[13px]"><S w={16} h={20}><circle cx="4" cy="6" r="2.5" stroke="#0a64c0" strokeWidth="1.5" /><path d="M12 8c2 0 2 2 1 4l-2 3" stroke="#0a64c0" strokeWidth="2.4" /></S></span>
        <span className="ml-[10px]"><S w={22} h={22}><circle cx="11" cy="11" r="10" stroke="#1a72c8" strokeWidth="1.4" /><circle cx="7.5" cy="8.5" r="1.3" fill="#1a72c8" /><circle cx="14.5" cy="8.5" r="1.3" fill="#1a72c8" /><path d="M6 13c2 4 8 4 10 0" stroke="#1a72c8" strokeWidth="1.4" /></S></span>
        <span className="ml-[8px]"><S w={20} h={20}><path d="M1 14L13 2l6 6L8 19H1z" fill="#fff" stroke="#0a64c0" strokeWidth="2" /><path d="M1 14l6 5H1z" fill="#0a64c0" /></S></span>
        <span className="ml-[12px]"><S w={16} h={20}><rect x="4.5" y="0" width="7" height="12" rx="3.5" fill="#0a64c0" /><path d="M1 9c0 7 14 7 14 0M8 15v4M4 19h8" stroke="#0a64c0" strokeWidth="1.5" /></S></span>
        <span className="ml-[13px]"><S w={17} h={17}><rect x="0" y="0" width="8" height="8" fill="#0a64c0" /><rect x="9.5" y="0.5" width="6" height="6" stroke="#0a64c0" /><rect x="0" y="9" width="8" height="8" fill="#0a64c0" /><rect x="9" y="9" width="8" height="8" fill="#0a64c0" /></S></span>
      </div>
    </div>
  );
}

function Popup() {
  const hot = ['微信出现重大bug', '女儿借母亲子宫', '猪年央视春晚阵容', '郭德纲为于谦庆生', '演唱会飙高音猝死', '华谊向阿里借款7亿'];
  const rec = [['阿里巴巴批发', '白皮松', '吊顶装修效果图'], ['天眼宝鉴', '赌石之王', '超级黄金左手'], ['异能鉴定师传奇', '超级鉴宝师', '极品鉴定师']];
  const Title = ({ t, bar, icon }: { t: string; bar: string; icon: React.ReactNode }) => (
    <div className="h-[18px] flex items-center pl-[12px] pr-[13px]">
      <span className={`w-[3px] h-[18px] ${bar}`} />
      <span className="ml-[10px] text-[18px] font-bold text-[#aaaaaa] leading-none -mt-[4px]">{t}</span>
      <span className="ml-auto">{icon}</span>
    </div>
  );
  return (
    <div className="absolute left-[617px] top-[613px] w-[426px] h-[420px] bg-white flex text-[16px] text-[#3c3c3c] leading-none">
      <div className="flex-1 flex flex-col pt-[10px]">
        <Title t="热门搜索" bar="bg-[#ffa35a]" icon={<S w={18} h={18}><path d="M1 9A8 8 0 0114 3M17 9A8 8 0 014 15" stroke="#999" /><path d="M14 0v4h-4M4 18v-4h4" stroke="#999" /></S>} />
        <div className="mt-[8px] flex flex-col pl-[24px]">
          {hot.map(t => <div key={t} className="h-[35px] flex items-center">{t}</div>)}
        </div>
        <div className="mt-[8px] h-[2px] bg-[#f1f1f1]" />
        <div className="mt-[15px]">
          <Title t="推荐搜索" bar="bg-[#3ec46d]" icon={<S w={18} h={12}><path d="M0 1h18M0 6h18M0 11h18" stroke="#888" /></S>} />
        </div>
        <div className="mt-[14px] flex flex-col pl-[24px]">
          {rec.map(r => (
            <div key={r[0]} className="h-[35px] flex items-center gap-[30px]">
              {r.map(t => <span key={t}>{t}</span>)}
            </div>
          ))}
        </div>
      </div>
      <div className="w-[8px] h-[385px] bg-[#e4e4e4] rounded-b-[3px] mr-[2px]" />
    </div>
  );
}

function Status() {
  return (
    <div className="h-[40px] shrink-0 bg-[#dcdcde] border-b border-white flex items-center pl-[3px] text-[15px] text-[#555] leading-none whitespace-pre tracking-[0.3px]">
      <span className="w-[253px] [word-spacing:2.5px]">X = 0 Y = 0</span>
      <span className="w-[103px]">层高：  3</span>
      <span className="w-[167px] tracking-[0.6px]">标高: -0.05~2.95</span>
      <span className="w-[516px]">0</span>
      <span className="w-[19px] h-[30px] border-2 border-[#c0c0c0] border-l-0 flex items-center justify-end overflow-hidden">择</span>
      <span className="ml-[6px] w-[76px] h-[30px] border-2 border-[#b8b8b8] flex items-center justify-center tracking-normal">折线选择</span>
      <span className="ml-[3px] text-[#444] tracking-[0.4px] [word-spacing:1px]">格式：级别 + 直径 @ 间距,如：C6@200 或 C6-200</span>
    </div>
  );
}

const Tb = ({ children, on, line = true }: { children: React.ReactNode; on?: boolean; line?: boolean }) => (
  <div className={`w-[62px] h-full shrink-0 flex flex-col items-center justify-between pt-[7px] ${on ? 'bg-[#4a4a4a]' : ''}`}>
    <div className="h-[36px] flex items-center justify-center">{children}</div>
    <span className={`h-[3px] ${on ? 'w-[62px]' : 'w-[51px]'} ${line ? 'bg-[#76b9ed]' : ''}`} />
  </div>
);

function Taskbar() {
  return (
    <div className="h-[49px] shrink-0 bg-[#222222] flex items-center whitespace-nowrap leading-none">
      <div className="w-[60px] shrink-0 flex justify-center">
        <S w={20} h={20}><path d="M0 3l8-1v7.5H0zM9 2l11-2v9.5H9zM0 10.5h8V18l-8-1zM9 10.5h11V20L9 18z" fill="white" /></S>
      </div>
      <div className="w-[429px] h-full shrink-0 bg-[#f2f2f2] flex items-center pl-[10px] text-[19px] text-[#333]">
        <S w={30} h={30}><circle cx="15" cy="15" r="12" fill="#fff" stroke="#111" strokeWidth="3.5" /></S>
        <span className="ml-[11px] -mt-[2px]">在这里输入你要搜索的内容</span>
        <span className="ml-[118px]"><S w={14} h={20}><rect x="3.5" y="1" width="7" height="11" rx="3.5" stroke="#333" strokeWidth="1.5" /><path d="M1 9c0 6 12 6 12 0M7 15v4M3 19h8" stroke="#333" strokeWidth="1.5" /></S></span>
      </div>
      <div className="w-[60px] shrink-0 flex justify-center pl-[2px]">
        <S w={18} h={19}><path d="M1 1h12M1 18h12M1 6h12v7H1zM17 1v2M17 8v3M17 16v2" stroke="white" strokeWidth="1.5" /></S>
      </div>
      <div className="w-[66px] shrink-0 flex justify-center">
        <S w={27} h={26}><circle cx="13.5" cy="13" r="3" fill="#ddd" /><path d="M12.5 11C6 13 2 9 4 3.5c3-3 9.5-3 11.5 1zM15.5 12C13.5 5.5 17 2 23 3.5c3 3 3 9.5-1 11zM14.5 15c6.5-2 10.5 2 8.5 7.5-3 3-9.5 3-11.5-1zM11.5 14c2 6.5-1.5 10-7.5 8.5-3-3-3-9.5 1-11z" fill="#ddd" /></S>
      </div>
      <div className="w-[188px] h-[38px] shrink-0 bg-[#e6e6e6] flex items-center pl-[5px] text-[15px] text-[#aaaaaa]">
        <span className="w-[24px] text-[36px] leading-[30px] font-bold text-[#1e90ff] [font-family:'Liberation_Sans',sans-serif] -mt-[6px]">e</span>
        <span className="ml-[7px]">范冰冰近况曝光</span>
        <span className="ml-[18px]"><S w={20} h={20}><circle cx="9" cy="9" r="8" stroke="#999" strokeWidth="1.4" /><path d="M15 15l4 4" stroke="#999" strokeWidth="1.6" /></S></span>
      </div>
      <div className="w-[24px] shrink-0 flex pl-[9px] gap-[2px]"><span className="w-px h-[26px] bg-[#555]" /><span className="w-px h-[26px] bg-[#555]" /></div>
      <Tb line={false}>
        <div className="w-[28px] h-[28px] rounded-full bg-gradient-to-b from-[#c8f08c] to-[#3fb02f] border-2 border-[#d9f5c5] flex items-center justify-center text-white font-bold text-[24px] [font-family:'Liberation_Sans',sans-serif] -mt-[2px]">e</div>
      </Tb>
      <Tb><span className="text-[42px] leading-[36px] font-bold text-[#0a78d7] [font-family:'Liberation_Sans',sans-serif] -mt-[8px]">e</span></Tb>
      <Tb><S w={28} h={24}><path d="M1 1h9l2 3h15v19H1z" fill="#ffe08a" /><path d="M1 1h9l2 3H1z" fill="#e8c158" /><path d="M9 23v-8h10v8h-3v-5h-4v5z" fill="#2aa0e8" /></S></Tb>
      <Tb><div className="w-[30px] h-[30px] rounded-[6px] bg-[#f45b38] text-white text-[22px] font-bold flex items-center justify-center">审</div></Tb>
      <Tb><div className="w-[30px] h-[30px] rounded-[4px] bg-[#145da8] border-2 border-[#8c98a6] text-[#cfe0f2] text-[11px] font-bold flex items-center justify-center [font-family:'Liberation_Sans',sans-serif]">CAD</div></Tb>
      <Tb on><div className="w-[30px] h-[30px] rounded-[5px] bg-gradient-to-b from-[#4ea8f5] to-[#1a77e0] text-white text-[24px] font-bold flex items-center justify-center [font-family:'Liberation_Sans',sans-serif]">T</div></Tb>
      <Tb><S w={30} h={25}><ellipse cx="11" cy="10" rx="10.5" ry="9" fill="#7ac943" /><path d="M5 16l-1 5 6-3z" fill="#7ac943" /><circle cx="7.5" cy="8" r="1.4" fill="#1d5d1a" /><circle cx="14" cy="8" r="1.4" fill="#1d5d1a" /><ellipse cx="21" cy="16" rx="8.5" ry="7.5" fill="#f0f0f0" /><circle cx="18" cy="15" r="1.1" fill="#777" /><circle cx="24" cy="15" r="1.1" fill="#777" /></S></Tb>
      <Tb><div className="w-[30px] h-[30px] rounded-[5px] bg-[#6fb6de] text-white text-[22px] font-bold flex items-center justify-center">预</div></Tb>
      <Tb>
        <div className="flex items-end">
          <span className="w-[12px] h-[18px] bg-[#eeeeee] border border-[#888] -mr-[3px]" />
          <span className="text-[24px] leading-[24px] font-bold text-[#ffd800] [font-family:'Liberation_Sans',sans-serif] mb-[4px]">?</span>
        </div>
      </Tb>
      <div className="ml-[160px] flex items-center">
        <S w={16} h={16}><circle cx="8" cy="8" r="8" fill="#9ba7a0" /><circle cx="8" cy="8" r="4.5" fill="#1f8f3c" /></S>
        <span className="ml-[26px]"><S w={18} h={19}><circle cx="12" cy="5" r="3.5" stroke="#eee" strokeWidth="1.2" /><circle cx="6" cy="9" r="3" stroke="#eee" strokeWidth="1.2" /><path d="M1 18v-2c0-2 2-4 5-4s5 2 5 4v2M11 9c4 0 6 2 6 5" stroke="#eee" strokeWidth="1.2" /></S></span>
        <span className="ml-[29px]"><S w={16} h={10}><path d="M1 9l7-7 7 7" stroke="#eee" strokeWidth="1.3" /></S></span>
        <span className="ml-[13px]"><S w={18} h={14}><path d="M1 5h3l5-4v12l-5-4H1z" stroke="#eee" strokeWidth="1.2" /><path d="M12 5l4 4M16 5l-4 4" stroke="#eee" strokeWidth="1.2" /></S></span>
        <span className="ml-[14px] w-[8px] h-[12px] bg-[#eee]" />
      </div>
    </div>
  );
}

export default function App() {
  return (
    <div className="w-[1700px] h-[1079px] relative overflow-hidden flex flex-col bg-[#f0f0f0] [font-family:'Noto_Sans_CJK_SC','Liberation_Sans',sans-serif]">
      <Header />
      <Ribbon />
      <OptionBar />
      <div className="h-[780px] shrink-0 flex">
        <LeftPanel />
        <CenterPanel />
        <div className="w-[6px] shrink-0 h-full flex flex-col bg-white">
          <div className="h-[330px] shrink-0" />
          <div className="h-[125px] shrink-0 bg-[#69707c]" />
        </div>
        <Canvas />
      </div>
      <Status />
      <Taskbar />
      <Popup />
      <svg width="1700" height="1079" className="absolute left-0 top-0 pointer-events-none">
        <polygon points="492,359 366,381 363,378 350,388 368,394 367,387" fill="#ff3333" />
        <polygon points="160,770 241,405 237,407 247,392 251,410 246,407" fill="#ff3333" />
        <polygon points="328,393 481,847 485,850 483,867 470,855 474,850" fill="#ff3333" />
      </svg>
    </div>
  );
}
